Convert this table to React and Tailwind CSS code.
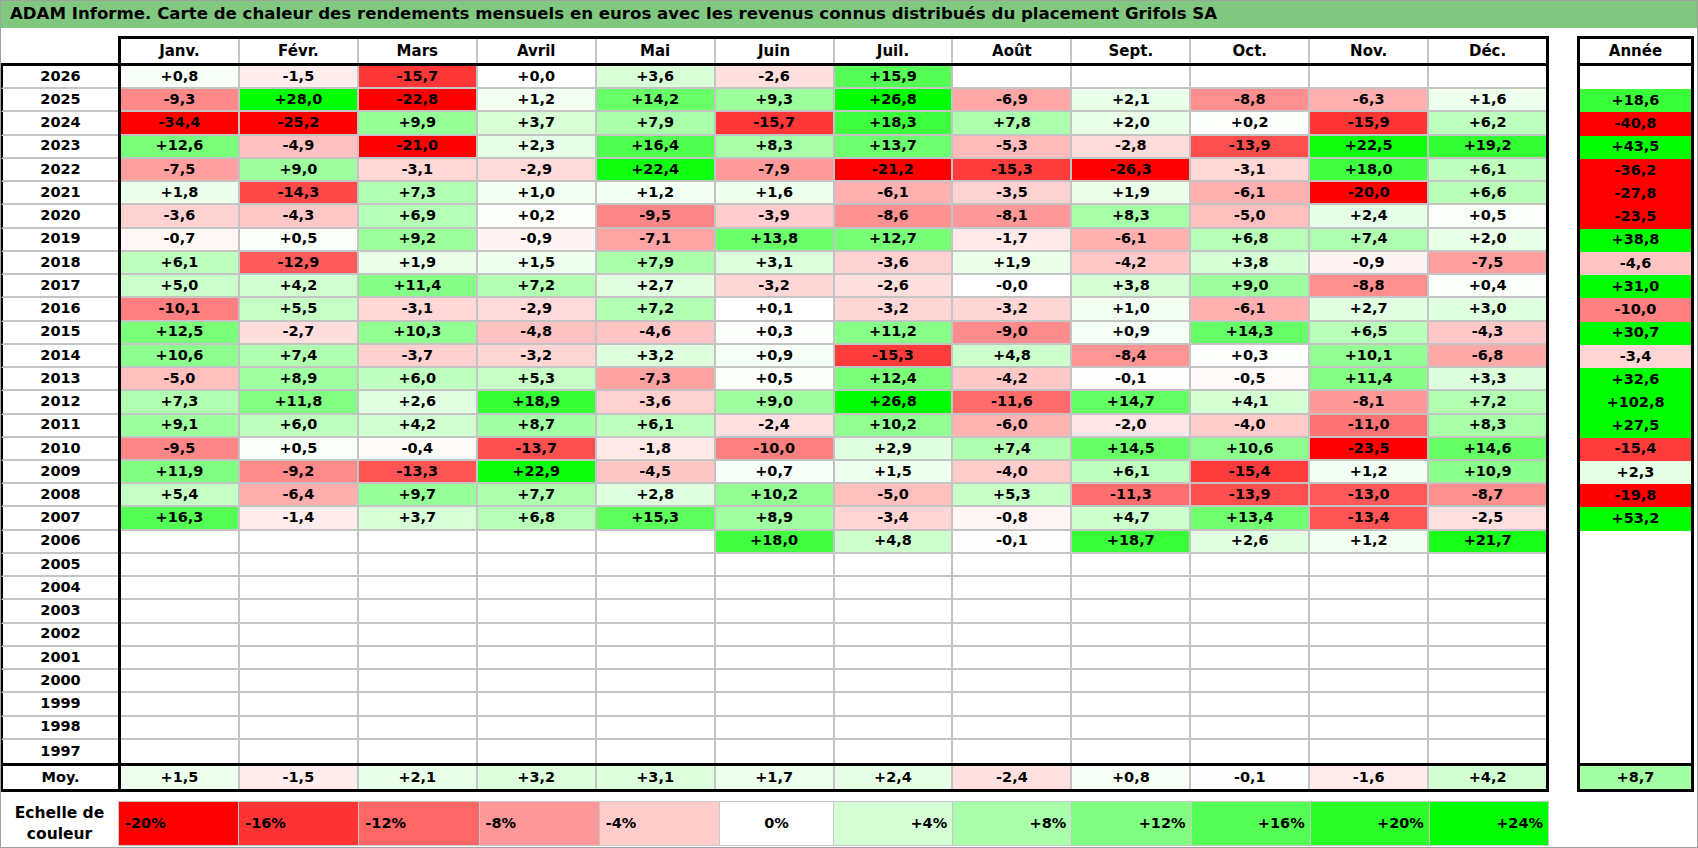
import React from 'react';

const MONTHS = ['Janv.', 'Févr.', 'Mars', 'Avril', 'Mai', 'Juin', 'Juil.', 'Août', 'Sept.', 'Oct.', 'Nov.', 'Déc.'];

// "_" = empty cell, last value = Année
const ROWS = [
  ['2026', '+0,8 -1,5 -15,7 +0,0 +3,6 -2,6 +15,9 _ _ _ _ _ _'],
  ['2025', '-9,3 +28,0 -22,8 +1,2 +14,2 +9,3 +26,8 -6,9 +2,1 -8,8 -6,3 +1,6 +18,6'],
  ['2024', '-34,4 -25,2 +9,9 +3,7 +7,9 -15,7 +18,3 +7,8 +2,0 +0,2 -15,9 +6,2 -40,8'],
  ['2023', '+12,6 -4,9 -21,0 +2,3 +16,4 +8,3 +13,7 -5,3 -2,8 -13,9 +22,5 +19,2 +43,5'],
  ['2022', '-7,5 +9,0 -3,1 -2,9 +22,4 -7,9 -21,2 -15,3 -26,3 -3,1 +18,0 +6,1 -36,2'],
  ['2021', '+1,8 -14,3 +7,3 +1,0 +1,2 +1,6 -6,1 -3,5 +1,9 -6,1 -20,0 +6,6 -27,8'],
  ['2020', '-3,6 -4,3 +6,9 +0,2 -9,5 -3,9 -8,6 -8,1 +8,3 -5,0 +2,4 +0,5 -23,5'],
  ['2019', '-0,7 +0,5 +9,2 -0,9 -7,1 +13,8 +12,7 -1,7 -6,1 +6,8 +7,4 +2,0 +38,8'],
  ['2018', '+6,1 -12,9 +1,9 +1,5 +7,9 +3,1 -3,6 +1,9 -4,2 +3,8 -0,9 -7,5 -4,6'],
  ['2017', '+5,0 +4,2 +11,4 +7,2 +2,7 -3,2 -2,6 -0,0 +3,8 +9,0 -8,8 +0,4 +31,0'],
  ['2016', '-10,1 +5,5 -3,1 -2,9 +7,2 +0,1 -3,2 -3,2 +1,0 -6,1 +2,7 +3,0 -10,0'],
  ['2015', '+12,5 -2,7 +10,3 -4,8 -4,6 +0,3 +11,2 -9,0 +0,9 +14,3 +6,5 -4,3 +30,7'],
  ['2014', '+10,6 +7,4 -3,7 -3,2 +3,2 +0,9 -15,3 +4,8 -8,4 +0,3 +10,1 -6,8 -3,4'],
  ['2013', '-5,0 +8,9 +6,0 +5,3 -7,3 +0,5 +12,4 -4,2 -0,1 -0,5 +11,4 +3,3 +32,6'],
  ['2012', '+7,3 +11,8 +2,6 +18,9 -3,6 +9,0 +26,8 -11,6 +14,7 +4,1 -8,1 +7,2 +102,8'],
  ['2011', '+9,1 +6,0 +4,2 +8,7 +6,1 -2,4 +10,2 -6,0 -2,0 -4,0 -11,0 +8,3 +27,5'],
  ['2010', '-9,5 +0,5 -0,4 -13,7 -1,8 -10,0 +2,9 +7,4 +14,5 +10,6 -23,5 +14,6 -15,4'],
  ['2009', '+11,9 -9,2 -13,3 +22,9 -4,5 +0,7 +1,5 -4,0 +6,1 -15,4 +1,2 +10,9 +2,3'],
  ['2008', '+5,4 -6,4 +9,7 +7,7 +2,8 +10,2 -5,0 +5,3 -11,3 -13,9 -13,0 -8,7 -19,8'],
  ['2007', '+16,3 -1,4 +3,7 +6,8 +15,3 +8,9 -3,4 -0,8 +4,7 +13,4 -13,4 -2,5 +53,2'],
  ['2006', '_ _ _ _ _ +18,0 +4,8 -0,1 +18,7 +2,6 +1,2 +21,7 _'],
  ['2005', '_ _ _ _ _ _ _ _ _ _ _ _ _'],
  ['2004', '_ _ _ _ _ _ _ _ _ _ _ _ _'],
  ['2003', '_ _ _ _ _ _ _ _ _ _ _ _ _'],
  ['2002', '_ _ _ _ _ _ _ _ _ _ _ _ _'],
  ['2001', '_ _ _ _ _ _ _ _ _ _ _ _ _'],
  ['2000', '_ _ _ _ _ _ _ _ _ _ _ _ _'],
  ['1999', '_ _ _ _ _ _ _ _ _ _ _ _ _'],
  ['1998', '_ _ _ _ _ _ _ _ _ _ _ _ _'],
  ['1997', '_ _ _ _ _ _ _ _ _ _ _ _ _'],
].map(([year, s]) => {
  const v = s.split(' ').map((x) => (x === '_' ? '' : x));
  return { year, months: v.slice(0, 12), total: v[12] };
});

const AVG = '+1,5 -1,5 +2,1 +3,2 +3,1 +1,7 +2,4 -2,4 +0,8 -0,1 -1,6 +4,2'.split(' ');
const AVG_TOTAL = '+8,7';

const SCALE = [-20, -16, -12, -8, -4, 0, 4, 8, 12, 16, 20, 24];

// white -> red at -20, white -> green at +24
function heat(value) {
  if (value === '' || value == null) return '#ffffff';
  const n = typeof value === 'number' ? value : parseFloat(value.replace(',', '.'));
  if (n >= 0) {
    const c = Math.round(255 * (1 - Math.min(n / 24, 1)));
    return `rgb(${c},255,${c})`;
  }
  const c = Math.round(255 * (1 - Math.min(-n / 20, 1)));
  return `rgb(255,${c},${c})`;
}

function DataRow({ row, last }) {
  return (
    <div className="flex flex-1 min-h-0">
      <div className={`w-[117px] flex items-center justify-center border-l-2 border-l-black ${last ? '' : 'border-b-2 border-b-[#c4c4c4]'}`}>
        {row.year}
      </div>
      <div className="flex flex-1 border-x-[3px] border-black">
        {row.months.map((m, i) => (
          <div
            key={i}
            className={`flex-1 flex items-center justify-center ${i < 11 ? 'border-r-2 border-r-[#c4c4c4]' : ''} ${last ? '' : 'border-b-2 border-b-[#c4c4c4]'}`}
            style={{ backgroundColor: heat(m) }}
          >
            {m}
          </div>
        ))}
      </div>
    </div>
  );
}

export default function App() {
  return (
    <div className="w-[1698px] h-[848px] border border-[#a0a0a0] bg-white text-black font-bold font-['DejaVu_Sans',sans-serif] text-[14.5px] overflow-hidden">
      {/* Title */}
      <div className="h-[27px] bg-[#80c880] flex items-center pl-[9px] text-[16.6px] whitespace-nowrap">
        ADAM Informe. Carte de chaleur des rendements mensuels en euros avec les revenus connus distribués du placement Grifols SA
      </div>

      <div className="mt-[8px] flex">
        {/* Main table */}
        <div className="w-[1548px] flex flex-col">
          <div className="flex h-[30px] border-b-[3px] border-black text-[15px]">
            <div className="w-[117px]" />
            <div className="flex flex-1 border-x-[3px] border-t-[3px] border-black">
              {MONTHS.map((m, i) => (
                <div key={m} className={`flex-1 flex items-center justify-center ${i < 11 ? 'border-r-2 border-[#c4c4c4]' : ''}`}>
                  {m}
                </div>
              ))}
            </div>
          </div>

          <div className="h-[697px] flex flex-col">
            {ROWS.map((row, i) => (
              <DataRow key={row.year} row={row} last={i === ROWS.length - 1} />
            ))}
          </div>

          <div className="flex h-[29px] border-y-[3px] border-black">
            <div className="w-[117px] flex items-center justify-center border-l-2 border-black">Moy.</div>
            <div className="flex flex-1 border-x-[3px] border-black">
              {AVG.map((m, i) => (
                <div
                  key={i}
                  className={`flex-1 flex items-center justify-center ${i < 11 ? 'border-r-2 border-[#c4c4c4]' : ''}`}
                  style={{ backgroundColor: heat(m) }}
                >
                  {m}
                </div>
              ))}
            </div>
          </div>
        </div>

        {/* Année */}
        <div className="ml-[28px] w-[117px] flex flex-col">
          <div className="h-[30px] border-[3px] border-black flex items-center justify-center text-[15px]">Année</div>
          <div className="h-[697px] flex flex-col border-x-[3px] border-black">
            {ROWS.map((row) => (
              <div
                key={row.year}
                className="flex-1 min-h-0 flex items-center justify-center"
                style={{ backgroundColor: heat(row.total) }}
              >
                {row.total}
              </div>
            ))}
          </div>
          <div
            className="h-[29px] border-[3px] border-black flex items-center justify-center"
            style={{ backgroundColor: heat(AVG_TOTAL) }}
          >
            {AVG_TOTAL}
          </div>
        </div>
      </div>

      {/* Colour scale */}
      <div className="mt-[9px] flex h-[45px]">
        <div className="w-[117px] flex items-center justify-center text-center text-[15.5px] leading-[21px]">
          Echelle de<br />couleur
        </div>
        <div className="w-[1431px] flex border-y border-l border-[#c8c8c8]">
          {SCALE.map((s) => (
            <div
              key={s}
              className={`flex-1 flex items-center border-r border-[#c8c8c8] ${s < 0 ? 'justify-start pl-[6px]' : s === 0 ? 'justify-center' : 'justify-end pr-[5px]'}`}
              style={{ backgroundColor: heat(s) }}
            >
              {s > 0 ? `+${s}%` : `${s}%`}
            </div>
          ))}
        </div>
      </div>
    </div>
  );
}
